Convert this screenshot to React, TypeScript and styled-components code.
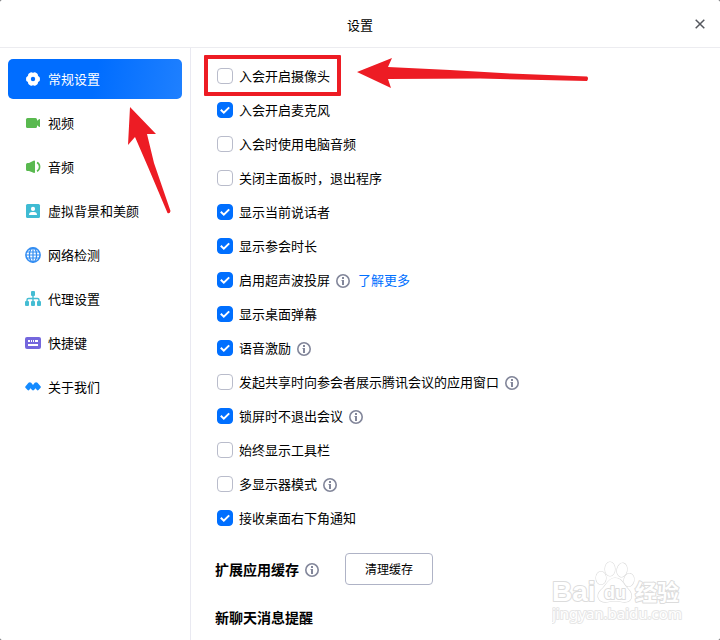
import React from 'react';
import styled, { createGlobalStyle } from 'styled-components';

const GlobalStyle = createGlobalStyle`
  * { box-sizing: border-box; }
  body {
    margin: 0;
    background: #55565a;
    color: #000;
    font: 13px/20px "Noto Sans CJK SC", sans-serif;
  }
  button, input { font: inherit; margin: 0; }
`;

const Window = styled.div`
  position: relative;
  display: flex;
  flex-direction: column;
  min-height: 100vh;
  background: #fff;
  border-radius: 2px;
  overflow: hidden;
`;

const TitleBar = styled.header`
  display: grid;
  grid-template-columns: 40px 1fr 40px;
  align-items: center;
  height: 48px;
  border-bottom: 1px solid #ececf0;
`;

const Title = styled.h1`
  grid-column: 2;
  margin: 0;
  padding-top: 2px;
  font-size: 13px;
  font-weight: 400;
  text-align: center;
`;

const CloseButton = styled.button`
  display: grid;
  place-items: center;
  height: 40px;
  padding: 0;
  border: 0;
  background: none;
`;

const Body = styled.div`
  display: flex;
  flex: 1;
`;

const Sidebar = styled.nav`
  display: flex;
  flex-direction: column;
  gap: 4px;
  width: 191px;
  flex: none;
  padding: 11px 8px;
  border-right: 1px solid #e9e9f1;
`;

const NavButton = styled.button<{ $active?: boolean }>`
  display: flex;
  align-items: center;
  gap: 7px;
  height: 40px;
  padding: 0 17px;
  border: 0;
  border-radius: 5px;
  color: ${p => (p.$active ? '#fff' : '#000')};
  background: ${p => (p.$active ? 'linear-gradient(100deg, #006dff 50%, #1f80ff)' : 'none')};
  text-align: left;
`;

const NavIcon = styled.svg`
  width: 16px;
  height: 16px;
  flex: none;
`;

const Content = styled.main`
  flex: 1;
  min-width: 0;
  padding: 11px 24px 12px;
`;

const OptionList = styled.ul`
  margin: 0;
  padding: 0 2px;
  list-style: none;
`;

const OptionRow = styled.li`
  position: relative;
  display: flex;
  align-items: center;
  height: 34px;
`;

const OptionLabel = styled.label`
  display: flex;
  align-items: center;
  gap: 6px;
`;

const CheckSlot = styled.span`
  display: grid;
  width: 16px;
  height: 16px;
  > * { grid-area: 1 / 1; }
`;

const CheckInput = styled.input`
  appearance: none;
  width: 16px;
  height: 16px;
  border: 1px solid #b9bccb;
  border-radius: 4px;
  background: #fff;
  &:checked { border-color: #006fff; background: #006fff; }
  &:checked + svg { visibility: visible; }
`;

const CheckMark = styled.svg`
  visibility: hidden;
  pointer-events: none;
`;

const InfoIcon = styled.svg`
  width: 14px;
  height: 14px;
  flex: none;
  margin: 2px 0 0 6px;
`;

const MoreLink = styled.a`
  margin-left: 8px;
  color: #0070ff;
  text-decoration: none;
`;

const Highlight = styled.span`
  position: absolute;
  top: -4px;
  left: -13px;
  width: 137px;
  height: 41px;
  border: 4px solid #ed1c24;
  border-radius: 1px;
  pointer-events: none;
`;

const CacheSection = styled.section`
  display: flex;
  align-items: center;
  margin-top: 18px;
`;

const SectionTitle = styled.h2`
  margin: 0;
  font-size: 14px;
  line-height: 20px;
  font-weight: 700;
`;

const NotifySection = styled.section`
  margin-top: 22px;
`;

const OutlineButton = styled.button`
  width: 88px;
  height: 32px;
  margin-left: 26px;
  padding: 0;
  border: 1px solid #afb3c6;
  border-radius: 4px;
  background: #fff;
  color: #000;
  font-size: 12px;
`;

const Arrow = styled.svg<{ $top: number; $left: number }>`
  position: absolute;
  top: ${p => p.$top}px;
  left: ${p => p.$left}px;
  fill: #ed1c24;
  pointer-events: none;
`;

const Watermark = styled.svg`
  position: absolute;
  right: 36px;
  bottom: 14px;
  pointer-events: none;
`;

const icons: Record<string, React.ReactNode> = {
  gear: (
    <>
      <path d="M5.4 1.6Q6.2.9 7.2 1.5Q8 2 8.8 1.5Q9.8.9 10.6 1.6L12.1 2.5Q13 3.2 12.9 4.2Q13 5.1 13.8 5.4Q14.9 6 14.9 7V9Q14.9 10 13.8 10.6Q13 10.9 12.9 11.8Q13 12.8 12.1 13.5L10.6 14.4Q9.8 15.1 8.8 14.5Q8 14 7.2 14.5Q6.2 15.1 5.4 14.4L3.9 13.5Q3 12.8 3.1 11.8Q3 10.9 2.2 10.6Q1.1 10 1.1 9V7Q1.1 6 2.2 5.4Q3 5.1 3.1 4.2Q3 3.2 3.9 2.5Z" fill="#fff" />
      <circle cx="8" cy="8" r="2.2" fill="#006dff" />
    </>
  ),
  video: (
    <>
      <rect x="1" y="3" width="11" height="10" rx="1.5" fill="#59b94f" />
      <path d="M11 6.500l3-2.200q1-.7 1 .4v6.600q0 1.100-1 .4L11 9.500z" fill="#59b94f" />
    </>
  ),
  audio: (
    <>
      <path d="M1 5.500Q1 4 2.500 4H4L8.500 1.800Q10 1.200 10 2.500V13Q10 14.300 8.500 13.700L4 12H2.500Q1 12 1 10.500z" fill="#59b94f" />
      <path d="M12 3.500q2.600 1.200 2.600 4.300t-2.600 4.400" fill="none" stroke="#59b94f" strokeWidth="1.600" />
    </>
  ),
  person: (
    <>
      <rect x="1" y="1" width="14" height="14" rx="1.500" fill="#3fbbd3" />
      <circle cx="8" cy="5.900" r="2.100" fill="#fff" />
      <path d="M4 12q0-3 3-3h2q3 0 3 3z" fill="#fff" />
    </>
  ),
  globe: (
    <g fill="none" stroke="#338df2" strokeWidth="1.600">
      <circle cx="8" cy="8" r="7.100" />
      <ellipse cx="8" cy="8" rx="3.600" ry="7.100" strokeWidth="1.300" />
      <path d="M8 1v14M2 5h12M2 11h12" strokeWidth="1.200" />
      <path d="M1 8h14" strokeWidth="1" />
    </g>
  ),
  tree: (
    <>
      <g fill="#45bdd3">
        <rect x="6" y="0" width="4" height="5" rx="1" />
        <rect x="0" y="10" width="4" height="5" rx="1" />
        <rect x="6" y="10" width="4" height="5" rx="1" />
        <rect x="12" y="10" width="4" height="5" rx="1" />
      </g>
      <path d="M8 4v7M2 11V9q0-1.500 1.500-1.500h9Q14 7.500 14 9v2" fill="none" stroke="#45bdd3" strokeWidth="1.400" />
    </>
  ),
  keyboard: (
    <>
      <rect x="0" y="2" width="16" height="12" rx="2" fill="#7467dd" />
      <path d="M3 5h2v2H3zM6 5h1v2H6zM8 5h1v2H8zM10 5h3v2h-3zM3 9h10v2H3z" fill="#fff" />
    </>
  ),
  mountain: (
    <path d="M.4 7.500L3.500 3.800Q4.800 2.500 6.200 3.800L8 5.900L9.700 3.800Q11.100 2.500 12.500 3.800L15.700 7.500Q16.200 8.100 15.600 8.700L13.500 11Q12.700 11.800 11.900 11L10.600 9.200L9 11.100Q8 11.900 7.100 11.100L5.500 9.200L4.200 11Q3.400 11.800 2.600 11L.4 8.700Q-.1 8.100.4 7.500z" fill="#158bff" />
  ),
};

const navItems = [
  { icon: 'gear', text: '常规设置' },
  { icon: 'video', text: '视频' },
  { icon: 'audio', text: '音频' },
  { icon: 'person', text: '虚拟背景和美颜' },
  { icon: 'globe', text: '网络检测' },
  { icon: 'tree', text: '代理设置' },
  { icon: 'keyboard', text: '快捷键' },
  { icon: 'mountain', text: '关于我们' },
];

interface Option {
  text: string;
  on?: boolean;
  info?: boolean;
  link?: string;
  marked?: boolean;
}

const options: Option[] = [
  { text: '入会开启摄像头', marked: true },
  { text: '入会开启麦克风', on: true },
  { text: '入会时使用电脑音频' },
  { text: '关闭主面板时，退出程序' },
  { text: '显示当前说话者', on: true },
  { text: '显示参会时长', on: true },
  { text: '启用超声波投屏', on: true, info: true, link: '了解更多' },
  { text: '显示桌面弹幕', on: true },
  { text: '语音激励', on: true, info: true },
  { text: '发起共享时向参会者展示腾讯会议的应用窗口', info: true },
  { text: '锁屏时不退出会议', on: true, info: true },
  { text: '始终显示工具栏' },
  { text: '多显示器模式', info: true },
  { text: '接收桌面右下角通知', on: true },
];

const Info = () => (
  <InfoIcon viewBox="0 0 14 14" aria-hidden="true">
    <circle cx="7" cy="7" r="6.200" fill="none" stroke="#82869a" strokeWidth="1.600" />
    <path d="M6 3h2v2H6zM5.500 6H8v5H6V7h-.5z" fill="#82869a" />
  </InfoIcon>
);

export default function App() {
  return (
    <>
      <GlobalStyle />
      <Window>
        <TitleBar>
          <Title>设置</Title>
          <CloseButton aria-label="关闭">
            <svg width="10" height="10" viewBox="0 0 10 10">
              <path d="M.7.700l8.600 8.600M9.300.700L.7 9.300" stroke="#55585e" strokeWidth="1.500" />
            </svg>
          </CloseButton>
        </TitleBar>
        <Body>
          <Sidebar>
            {navItems.map((item, i) => (
              <NavButton key={item.icon} $active={i === 0}>
                <NavIcon viewBox="0 0 16 16" aria-hidden="true">{icons[item.icon]}</NavIcon>
                {item.text}
              </NavButton>
            ))}
          </Sidebar>
          <Content>
            <OptionList>
              {options.map(o => (
                <OptionRow key={o.text}>
                  <OptionLabel>
                    <CheckSlot>
                      <CheckInput type="checkbox" defaultChecked={o.on} />
                      <CheckMark width="16" height="16" viewBox="0 0 16 16" aria-hidden="true">
                        <path d="M3.800 7.800l3 2.900 5.400-5.300" fill="none" stroke="#fff" strokeWidth="2" />
                      </CheckMark>
                    </CheckSlot>
                    {o.text}
                  </OptionLabel>
                  {o.info && <Info />}
                  {o.link && <MoreLink href="#more">{o.link}</MoreLink>}
                  {o.marked && <Highlight />}
                </OptionRow>
              ))}
            </OptionList>
            <CacheSection>
              <SectionTitle>扩展应用缓存</SectionTitle>
              <Info />
              <OutlineButton>清理缓存</OutlineButton>
            </CacheSection>
            <NotifySection>
              <SectionTitle>新聊天消息提醒</SectionTitle>
            </NotifySection>
          </Content>
        </Body>
        <Arrow $top={56} $left={356} width="234" height="34" viewBox="0 0 234 34" aria-hidden="true">
          <path d="M1 16L36 2L32 11L94 14L154 17.500L231 20.500Q233 22 231 25L124 22.500L32 23L35 32Z" />
        </Arrow>
        <Arrow $top={106} $left={126} width="46" height="109" viewBox="0 0 46 109" aria-hidden="true">
          <path d="M4 1L30 28L21 28L28 57L44.500 105Q44 108 41.500 107L22 61L9 31L2 39Z" />
        </Arrow>
        <Watermark width="132" height="66" viewBox="0 0 132 66" aria-hidden="true">
          <g fill="#fff" stroke="#dcdcdc" strokeWidth="2" strokeLinejoin="round" paintOrder="stroke">
            <text x="0" y="41" fontFamily="Liberation Sans" fontWeight="700" fontSize="28">Bai</text>
            <g strokeWidth="1.200">
              <ellipse cx="49" cy="18" rx="5" ry="6.500" />
              <ellipse cx="58" cy="9" rx="5" ry="7" />
              <ellipse cx="70" cy="10" rx="5" ry="7" transform="rotate(12 70 10)" />
              <ellipse cx="77" cy="20" rx="5" ry="6.500" transform="rotate(12 77 20)" />
              <path d="M63 18C56 18 54 26 49 30C43 36 47 43 55 42Q63 40 71 42C80 43 82 35 76 29C71 24 70 18 63 18Z" />
            </g>
            <text x="52" y="39" fontFamily="Liberation Sans" fontWeight="700" fontSize="18">du</text>
            <text x="83" y="40" fontFamily="Noto Sans CJK SC" fontWeight="700" fontSize="22">经验</text>
            <text x="0" y="59" fontFamily="Noto Sans" fontSize="15" stroke="#e6e6e6">jingyan.baidu.com</text>
          </g>
        </Watermark>
      </Window>
    </>
  );
}
